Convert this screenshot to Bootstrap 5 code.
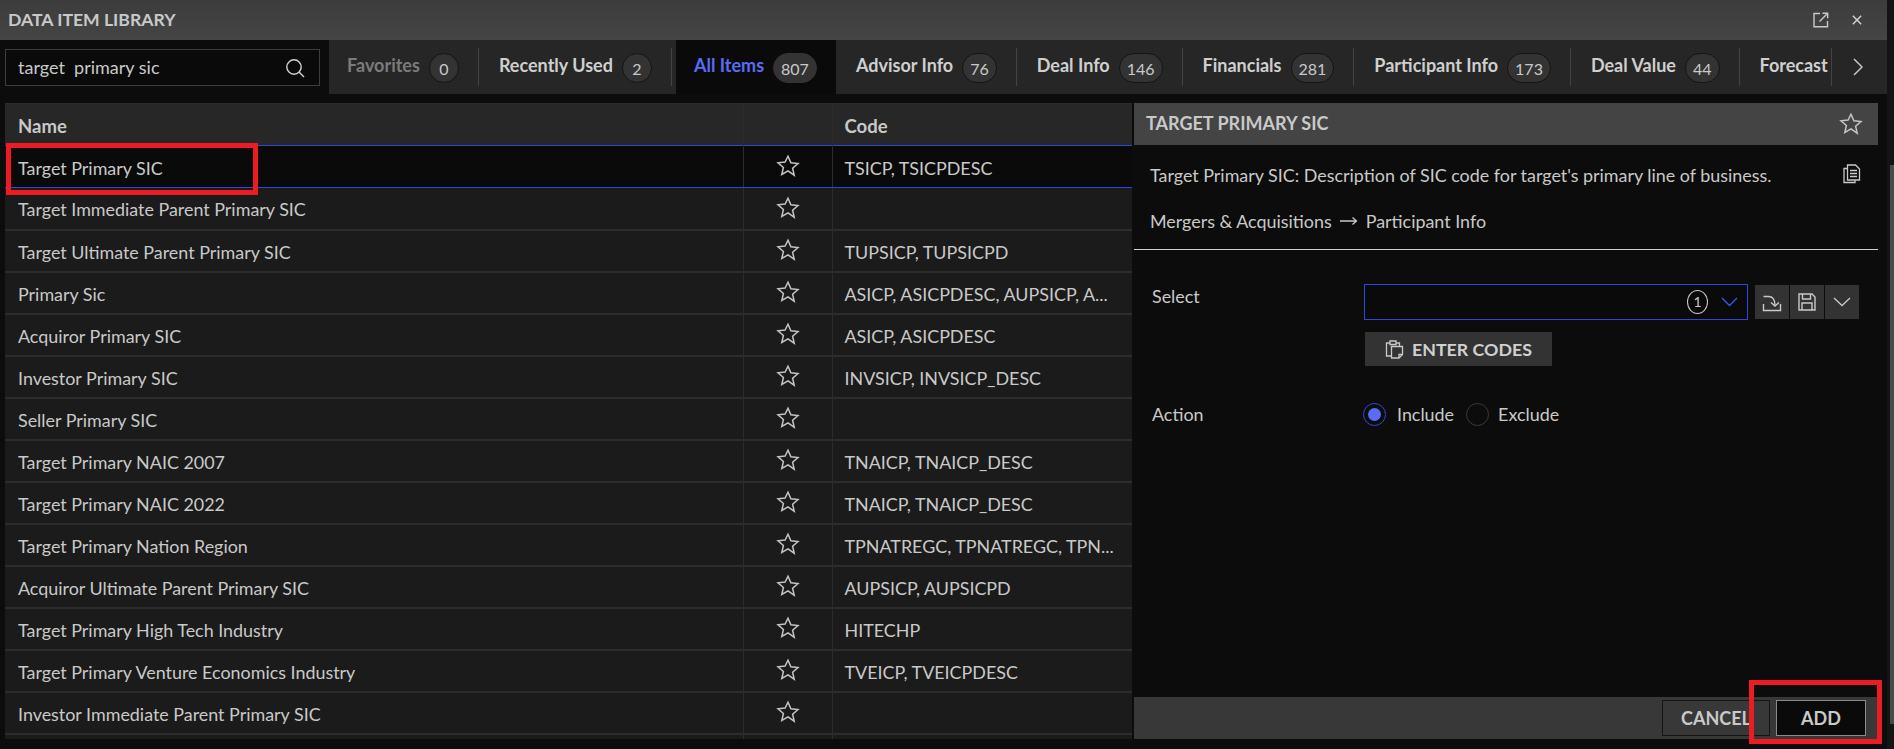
<!DOCTYPE html>
<html lang="en">
<head>
<meta charset="utf-8">
<title>Data Item Library</title>
<link href="https://cdn.jsdelivr.net/npm/bootstrap@5.3.0/dist/css/bootstrap.min.css" rel="stylesheet">
<style>
html,body{height:100%;margin:0;overflow:hidden;background:#0c0c0c;}
body{font-family:"Lato","Liberation Sans",sans-serif;font-size:18px;color:#c9c9c9;}
.shell{width:1887px;height:749px;background:#0c0c0c;}
.edge{width:7px;height:749px;background:#141414;}
.thumb{width:4px;height:559px;margin-top:165px;margin-left:3px;background:#4a4a4a;}
.titlebar{height:40px;background:linear-gradient(#3c3c3c,#454545);padding:0 25px 0 8px;}
.titlebar h1{font-size:17.6px;font-weight:700;margin:0;color:#c9c9c9;}
.winicons{gap:23px;}
.toolrow{height:54px;}
.searchbox{width:315px;height:37px;margin:9px 9px 0 5px;border:1px solid #3d3d3d;background:#0a0a0a;padding:0 14px 0 12px;color:#c9c9c9;flex:none;}
.tabstrip{background:#262626;height:54px;flex:1 1 auto;overflow:hidden;}
.tabx{height:54px;padding:0 20px;white-space:nowrap;position:relative;font-weight:700;color:#cfcfcf;gap:9px;flex:none;}
.tabx>span:first-child{margin-bottom:3px;}
.tabx::after{content:"";position:absolute;right:0;top:8px;bottom:8px;width:1px;background:#434343;}
.tabx.muted-tab{color:#7b7b7b;padding-left:18px;padding-right:20px;}
.tabx.on{background:#0a0a0a;color:#5a6cf5;padding:0 19px 0 18px;margin-left:4px;}
.tabx.on::after{display:none;}
.pill{display:inline-block;height:30px;padding:2px 7px 0;border-radius:15px;background:#333;border:1px solid #141414;font-weight:400;color:#c9c9c9;font-size:16px;line-height:26px;min-width:30px;text-align:center;margin-top:1px;}
.on .pill{background:#333;border-color:#333;}
.nextarrow{width:53px;height:54px;flex:none;}
.content{height:636px;margin-top:9px;padding-left:5px;}
.tablewrap{width:1127px;height:636px;overflow:hidden;background:#1b1b1b;flex:none;}
.gridtable{table-layout:fixed;width:1127px;margin:0;border-collapse:collapse;color:#c9c9c9;}
.gridtable th,.gridtable td{background:#1b1b1b;color:#c9c9c9;height:42px;padding:2px 12px 0 13px;border:0;border-bottom:2px solid #2c2c2c;border-right:1px solid #2c2c2c;vertical-align:middle;font-size:17.9px;line-height:24px;box-shadow:none;white-space:nowrap;overflow:hidden;}
.gridtable th{background:#272727;font-weight:700;border-top:1px solid #2c2c2c;border-bottom:0;font-size:18.5px;height:42px;}
.gridtable td:last-child,.gridtable th:last-child{border-right:0;}
.gridtable td.codecell{padding:2px 0 0 12px;font-size:17.9px;}
.gridtable th.codecell{padding-left:12px;}
.gridtable td.starcell{text-align:center;padding:0 0 3px;}
.gridtable td svg{display:inline-block;vertical-align:middle;}
.gridtable tr.picked td{background:#0a0a0a;border-top:1px solid #2d49dc;border-bottom:1px solid #2d49dc;}
.sidepanel{width:744px;height:636px;margin-left:2px;background:#0c0c0c;flex:none;font-size:17.9px;}
.panelhead{height:42px;background:#444;padding:0 15px 0 12px;}
.panelhead h2{font-size:18px;font-weight:700;margin:0;color:#c9c9c9;}
.descline{padding:19px 17px 0 16px;line-height:22px;}
.crumb{padding:24px 16px 0 16px;line-height:22px;}
.rule{height:1px;background:#cfcfcf;margin-top:17px;}
.fieldrow{padding:0 18px 0 18px;}
.gap-select{margin-top:34px;}
.gap-action{margin-top:35px;}
.fieldlabel{width:212px;flex:none;margin-top:-1px;}
.selectbox{width:384px;height:36px;border:1px solid #2d49dc;background:#0a0a0a;padding:0 9px 0 0;}
.numdot{width:21px;height:24px;border:1px solid #c9c9c9;border-radius:50%;font-size:14px;line-height:22px;text-align:center;margin-right:13px;}
.btngroup{margin-left:6px;}
.sqbtn{width:34px;height:34px;background:#333;border:0;padding:0;margin-left:1px;}
.codesbtn{width:187px;height:34px;background:#333;border:0;color:#d0d0d0;font-weight:700;font-size:17.8px;margin:12px 0 0 1px;gap:8px;padding:0;}
.radioout{width:23px;height:23px;border-radius:50%;border:1px solid #2d49dc;flex:none;}
.radioout.off{border-color:#3a3a3a;}
.radioin{width:13px;height:13px;border-radius:50%;background:#5a6cf5;}
.firstradio{margin-left:-1px;}
.lbl-include{margin:0 12px 0 11px;}
.lbl-exclude{margin-left:9px;}
.panelfoot{height:42px;background:#383838;padding:0 12px 0 0;margin-top:auto;gap:6px;}
.footbtn{height:36px;font-weight:700;font-size:18px;color:#c9c9c9;border-radius:0;padding:1px 0 0;}
.btn-cancel{width:108px;background:transparent;border:1px solid #141414;}
.btn-add{width:90px;background:#0a0a0a;border:1px solid #8a8a8a;}
.redmark{position:absolute;border:5px solid #ed1c24;pointer-events:none;}
.mark-row{left:6px;top:143px;width:252px;height:52px;}
.mark-add{left:1749px;top:680px;width:133px;height:64px;}
.canvas{position:relative;width:1894px;height:749px;}
</style>
</head>
<body>
<svg width="0" height="0" class="position-absolute">
<symbol id="star" viewBox="0 0 24 24"><path d="M12 2.2l2.9 6.6 7.1.7-5.4 4.7 1.6 7L12 16.9l-6.2 3.6 1.6-7L2 8.8l7.1-.7z" fill="none" stroke="#c4c4c4" stroke-width="1.5" stroke-linejoin="miter"/></symbol>
</svg>
<div class="canvas d-flex">
<div class="shell d-flex flex-column">
  <div class="titlebar d-flex align-items-center justify-content-between">
    <h1>DATA ITEM LIBRARY</h1>
    <div class="winicons d-flex align-items-center">
      <svg width="16" height="16" viewBox="0 0 16 16" fill="none" stroke="#c9c9c9" stroke-width="1.4"><path d="M7 1.5H1v13.2h13.5V9"/><path d="M6.5 9.5L14.5 1.5M9.5 1.2h5.2v5"/></svg>
      <svg width="10" height="10" viewBox="0 0 12 12" fill="none" stroke="#d0d0d0" stroke-width="1.8"><path d="M1 1l10 10M11 1L1 11"/></svg>
    </div>
  </div>
  <div class="toolrow d-flex">
    <div class="searchbox d-flex align-items-center justify-content-between">
      <span>target&nbsp; primary sic</span>
      <svg width="20" height="20" viewBox="0 0 20 20" fill="none" stroke="#d0d0d0" stroke-width="1.4"><circle cx="9" cy="9" r="7.2"/><path d="M14 14l5 5"/></svg>
    </div>
    <div class="tabstrip d-flex">
      <div class="tabx muted-tab d-flex align-items-center"><span>Favorites</span><span class="pill">0</span></div>
      <div class="tabx d-flex align-items-center"><span>Recently Used</span><span class="pill">2</span></div>
      <div class="tabx on d-flex align-items-center"><span>All Items</span><span class="pill">807</span></div>
      <div class="tabx d-flex align-items-center"><span>Advisor Info</span><span class="pill">76</span></div>
      <div class="tabx d-flex align-items-center"><span>Deal Info</span><span class="pill">146</span></div>
      <div class="tabx d-flex align-items-center"><span>Financials</span><span class="pill">281</span></div>
      <div class="tabx d-flex align-items-center"><span>Participant Info</span><span class="pill">173</span></div>
      <div class="tabx d-flex align-items-center"><span>Deal Value</span><span class="pill">44</span></div>
      <div class="tabx d-flex align-items-center pe-1"><span>Forecast</span></div>
      <div class="nextarrow d-flex align-items-center justify-content-center">
        <svg width="10" height="18" viewBox="0 0 10 18" fill="none" stroke="#c9c9c9" stroke-width="1.5"><path d="M1 1l8 8-8 8"/></svg>
      </div>
    </div>
  </div>
  <div class="content d-flex">
    <div class="tablewrap">
      <table class="table gridtable">
        <colgroup><col style="width:738px"><col style="width:89px"><col style="width:300px"></colgroup>
        <thead><tr><th>Name</th><th></th><th class="codecell">Code</th></tr></thead>
        <tbody>
          <tr class="picked"><td>Target Primary SIC</td><td class="starcell"><svg width="24" height="24"><use href="#star"/></svg></td><td class="codecell">TSICP, TSICPDESC</td></tr>
          <tr><td>Target Immediate Parent Primary SIC</td><td class="starcell"><svg width="24" height="24"><use href="#star"/></svg></td><td class="codecell"></td></tr>
          <tr><td>Target Ultimate Parent Primary SIC</td><td class="starcell"><svg width="24" height="24"><use href="#star"/></svg></td><td class="codecell">TUPSICP, TUPSICPD</td></tr>
          <tr><td>Primary Sic</td><td class="starcell"><svg width="24" height="24"><use href="#star"/></svg></td><td class="codecell">ASICP, ASICPDESC, AUPSICP, A...</td></tr>
          <tr><td>Acquiror Primary SIC</td><td class="starcell"><svg width="24" height="24"><use href="#star"/></svg></td><td class="codecell">ASICP, ASICPDESC</td></tr>
          <tr><td>Investor Primary SIC</td><td class="starcell"><svg width="24" height="24"><use href="#star"/></svg></td><td class="codecell">INVSICP, INVSICP_DESC</td></tr>
          <tr><td>Seller Primary SIC</td><td class="starcell"><svg width="24" height="24"><use href="#star"/></svg></td><td class="codecell"></td></tr>
          <tr><td>Target Primary NAIC 2007</td><td class="starcell"><svg width="24" height="24"><use href="#star"/></svg></td><td class="codecell">TNAICP, TNAICP_DESC</td></tr>
          <tr><td>Target Primary NAIC 2022</td><td class="starcell"><svg width="24" height="24"><use href="#star"/></svg></td><td class="codecell">TNAICP, TNAICP_DESC</td></tr>
          <tr><td>Target Primary Nation Region</td><td class="starcell"><svg width="24" height="24"><use href="#star"/></svg></td><td class="codecell">TPNATREGC, TPNATREGC, TPN...</td></tr>
          <tr><td>Acquiror Ultimate Parent Primary SIC</td><td class="starcell"><svg width="24" height="24"><use href="#star"/></svg></td><td class="codecell">AUPSICP, AUPSICPD</td></tr>
          <tr><td>Target Primary High Tech Industry</td><td class="starcell"><svg width="24" height="24"><use href="#star"/></svg></td><td class="codecell">HITECHP</td></tr>
          <tr><td>Target Primary Venture Economics Industry</td><td class="starcell"><svg width="24" height="24"><use href="#star"/></svg></td><td class="codecell">TVEICP, TVEICPDESC</td></tr>
          <tr><td>Investor Immediate Parent Primary SIC</td><td class="starcell"><svg width="24" height="24"><use href="#star"/></svg></td><td class="codecell"></td></tr>
          <tr><td></td><td></td><td></td></tr>
        </tbody>
      </table>
    </div>
    <div class="sidepanel d-flex flex-column">
      <div class="panelhead d-flex align-items-center justify-content-between">
        <h2>TARGET PRIMARY SIC</h2>
        <svg width="24" height="24"><use href="#star"/></svg>
      </div>
      <div class="descline d-flex justify-content-between">
        <span>Target Primary SIC: Description of SIC code for target's primary line of business.</span>
        <svg width="19" height="20" viewBox="0 0 19 20" fill="none" stroke="#c9c9c9" stroke-width="1.3"><path d="M5.5 1h8l4 4v11h-12z"/><path d="M8 6.5h7M8 9.5h7M8 12.5h7"/><path d="M5 4.5H2v14h11v-2.5"/></svg>
      </div>
      <div class="crumb d-flex align-items-center gap-2">
        <span>Mergers &amp; Acquisitions</span>
        <svg width="18" height="10" viewBox="0 0 18 10" fill="none" stroke="#c9c9c9" stroke-width="1.3"><path d="M0 5h16M12.5 1.5L16.5 5l-4 3.5"/></svg>
        <span>Participant Info</span>
      </div>
      <div class="rule"></div>
      <div class="fieldrow gap-select d-flex">
        <div class="fieldlabel">Select</div>
        <div class="d-flex flex-column">
          <div class="d-flex">
            <div class="selectbox d-flex align-items-center justify-content-end">
              <span class="numdot">1</span>
              <svg width="17" height="10" viewBox="0 0 17 10" fill="none" stroke="#3554f0" stroke-width="1.4"><path d="M1 1l7.5 7.5L16 1"/></svg>
            </div>
            <div class="btngroup d-flex align-items-center">
              <button class="sqbtn d-flex align-items-center justify-content-center" aria-label="Import"><svg width="20" height="20" viewBox="0 0 20 20" fill="none" stroke="#c9c9c9" stroke-width="1.4"><path d="M1.5 12v6.5h17V12"/><path d="M1.5 4.5h5c4 0 6.5 2.5 6.5 9"/><path d="M9 10.5l4 3.5 4-3.5"/></svg></button>
              <button class="sqbtn d-flex align-items-center justify-content-center" aria-label="Save"><svg width="20" height="20" viewBox="0 0 20 20" fill="none" stroke="#c9c9c9" stroke-width="1.4"><path d="M2 2h13l3 3v13H2z"/><path d="M5.5 2v5h8V2M5 18v-7h10v7"/></svg></button>
              <button class="sqbtn d-flex align-items-center justify-content-center" aria-label="More"><svg width="18" height="10" viewBox="0 0 18 10" fill="none" stroke="#c9c9c9" stroke-width="1.3"><path d="M1 1l8 7.5L17 1"/></svg></button>
            </div>
          </div>
          <button class="codesbtn d-flex align-items-center justify-content-center">
            <svg width="19" height="19" viewBox="0 0 19 19" fill="none" stroke="#c9c9c9" stroke-width="1.3"><path d="M5 3H1.5v13H6"/><path d="M5 1h6v3.5H5z"/><path d="M11 3h3.5v3"/><path d="M6.5 6.5h11v8l-3.5 3.5h-7.5z"/><path d="M14 18v-3.5h3.5"/></svg>
            <span>ENTER CODES</span>
          </button>
        </div>
      </div>
      <div class="fieldrow gap-action d-flex align-items-center">
        <div class="fieldlabel">Action</div>
        <div class="d-flex align-items-center">
          <span class="radioout firstradio d-flex align-items-center justify-content-center"><span class="radioin"></span></span>
          <span class="lbl-include">Include</span>
          <span class="radioout off"></span>
          <span class="lbl-exclude">Exclude</span>
        </div>
      </div>
      <div class="panelfoot d-flex align-items-center justify-content-end">
        <button class="btn footbtn btn-cancel">CANCEL</button>
        <button class="btn footbtn btn-add">ADD</button>
      </div>
    </div>
  </div>
</div>
<div class="edge"><div class="thumb"></div></div>
<div class="redmark mark-row"></div>
<div class="redmark mark-add"></div>
</div>
</body>
</html>
